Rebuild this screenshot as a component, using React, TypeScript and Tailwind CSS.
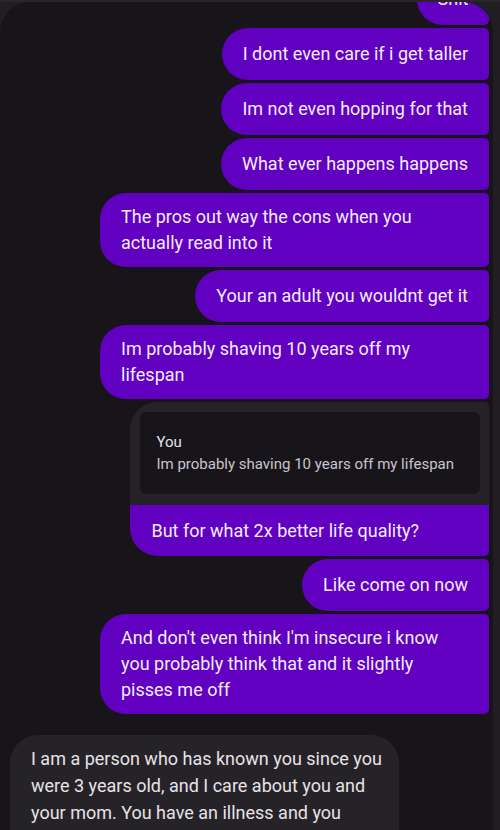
const font = { fontFamily: "Roboto, 'Noto Sans', sans-serif" };

const sent = [
  "I dont even care if i get taller",
  "Im not even hopping for that",
  "What ever happens happens",
  "The pros out way the cons when you actually read into it",
  "Your an adult you wouldnt get it",
  "Im probably shaving 10 years off my lifespan",
];

function Sent({ text }: { text: string }) {
  return (
    <div className="shrink-0 max-w-[389px] min-h-[52px] flex items-center rounded-l-[26px] rounded-r-[5px] bg-[#6100c1] px-[21px] py-[11px] text-[18px] leading-[26px] text-[#f3ecff]">
      {text}
    </div>
  );
}

export default function App() {
  return (
    <div
      className="h-[830px] w-[500px] overflow-hidden bg-[#211e23] border-t-2 border-[#28252b] pr-[7px]"
      style={font}
    >
      <div className="h-full overflow-hidden rounded-t-[30px] bg-[#18151a] flex flex-col items-end gap-[3px] pl-[10px] pr-[4px]">
        {/* partially scrolled-off bubble */}
        <div className="shrink-0 -mt-[29px] w-[72px] h-[52px] flex items-center justify-center rounded-l-[26px] rounded-r-[5px] bg-[#6100c1] text-[18px] leading-[26px] text-[#f3ecff]">
          Shit
        </div>

        {sent.map((t, i) => (
          <Sent key={i} text={t} />
        ))}

        {/* reply with quoted message */}
        <div className="shrink-0 overflow-hidden rounded-l-[28px] rounded-r-[5px] bg-[#262328]">
          <div className="pt-[10px] pl-[10px] pr-[9px] pb-[11px]">
            <div className="rounded-[6px] bg-[#18151a] pl-[16px] pr-[26px] py-[19px] text-[15px] leading-[22px]">
              <div className="text-[#e6e1e8]">You</div>
              <div className="text-[#c9c4cd]">Im probably shaving 10 years off my lifespan</div>
            </div>
          </div>
          <div className="h-[51px] flex items-center bg-[#6100c1] px-[21px] text-[18px] leading-[26px] text-[#f3ecff]">
            But for what 2x better life quality?
          </div>
        </div>

        <Sent text="Like come on now" />
        <Sent text="And don't even think I'm insecure i know you probably think that and it slightly pisses me off" />

        {/* incoming */}
        <div className="shrink-0 self-start mt-[18px] w-[389px] rounded-[28px] bg-[#262328] pl-[21px] pr-[16px] pt-[10px] pb-[12px] text-[18px] leading-[27px] text-[#e7e2e8]">
          I am a person who has known you since you were 3 years old, and I care about you and your mom. You have an illness and you need help and I want to help you get better.
        </div>
      </div>
    </div>
  );
}
